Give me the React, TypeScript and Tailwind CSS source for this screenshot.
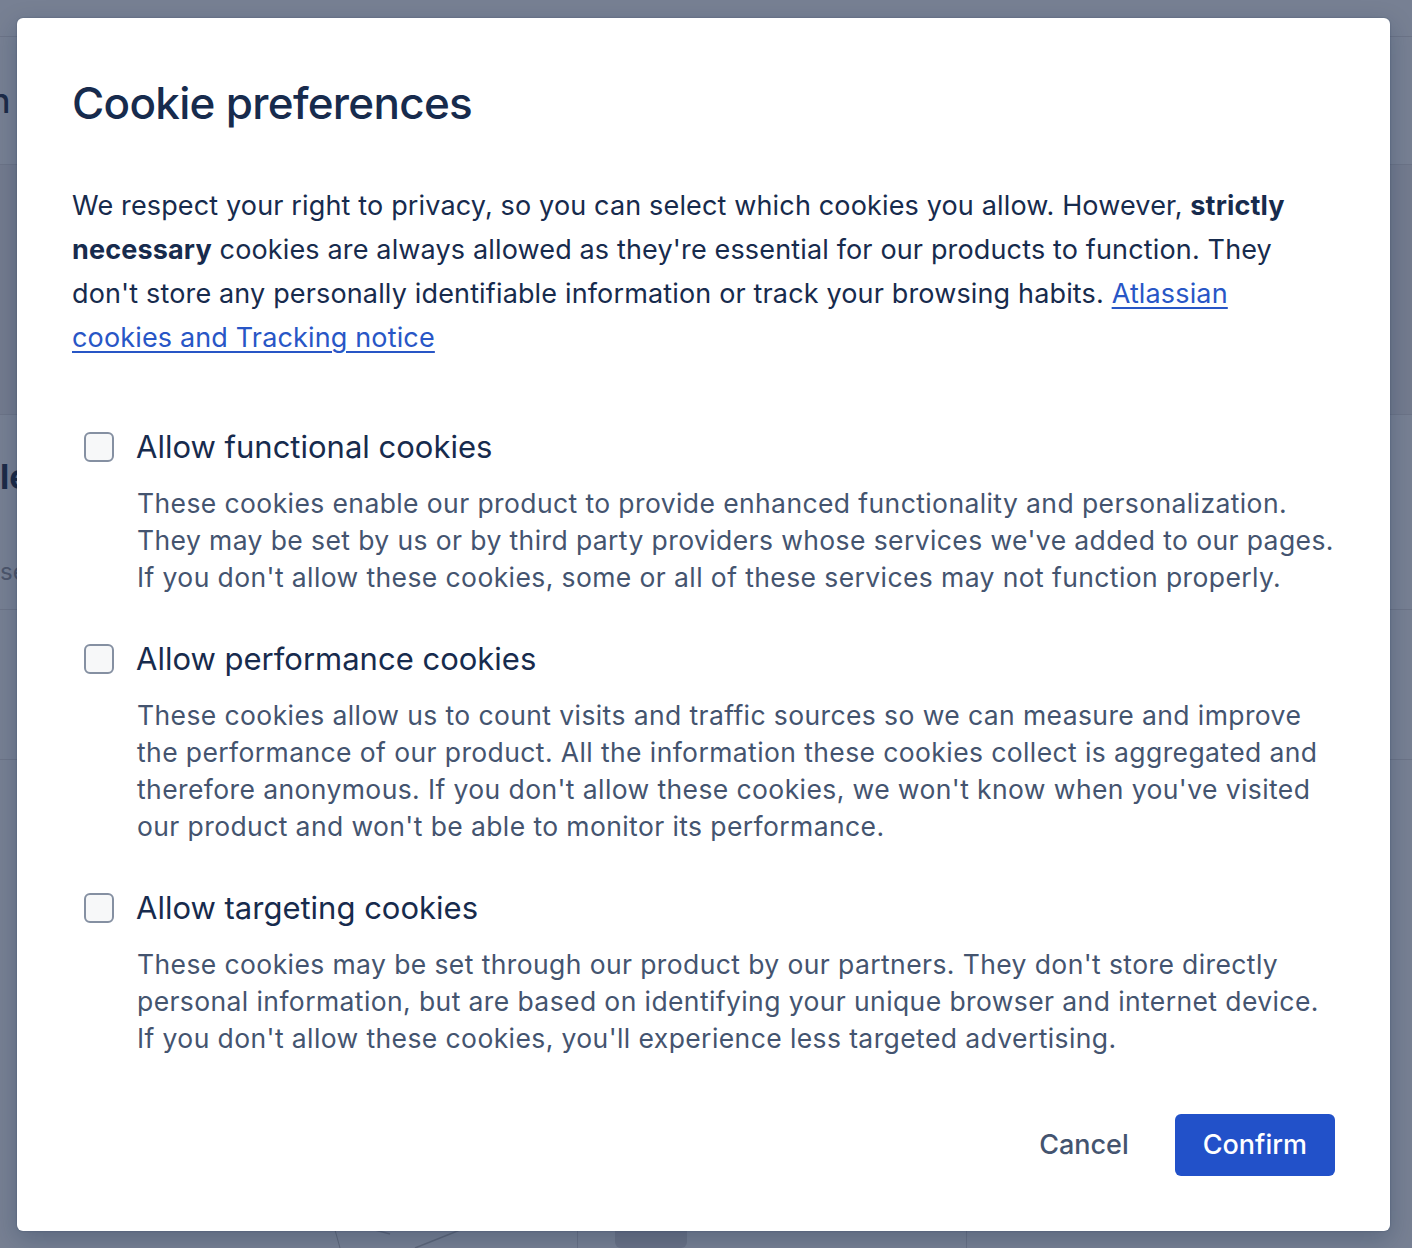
import React from "react";

const font = { fontFamily: "Inter, 'Noto Sans', 'Liberation Sans', sans-serif" };

function Section({ label, lines }: { label: string; lines: string[] }) {
  return (
    <div>
      <label className="flex items-center gap-[22px] h-[40px]">
        <span className="ml-[12px] h-[30px] w-[30px] shrink-0 rounded-[6px] border-2 border-[#8590a2] bg-[#f7f8f9]" />
        <span className="text-[31px] leading-[40px] text-[#172b4d]">{label}</span>
      </label>
      <p className="mt-[18px] pl-[65px] text-[26.5px] leading-[37px] tracking-[0.4px] text-[#44546f]">
        {lines.map((l, i) => (
          <React.Fragment key={i}>
            {l}
            {i < lines.length - 1 && <br />}
          </React.Fragment>
        ))}
      </p>
    </div>
  );
}

export default function App() {
  return (
    <div className="relative h-[1248px] w-full overflow-hidden bg-[#778093]" style={font}>
      {/* Dimmed page underneath */}
      <div className="flex h-full flex-col">
        <div className="h-[37px] border-b border-[#6c7487]" />
        <div className="flex h-[128px] items-center border-b border-[#6c7487]">
          <span className="-ml-[10px] text-[34px] font-medium text-[#1d2b47]">n</span>
        </div>
        <div className="h-[250px] border-b border-[#6c7487] bg-[#737b8e]" />
        <div className="flex h-[195px] flex-col items-start border-b border-[#6c7487] pt-[45px]">
          <span className="text-[34px] font-bold leading-none text-[#1d2b47]">learn</span>
          <span className="mt-[66px] text-[24px] leading-none text-[#4d566b]">settings</span>
        </div>
        <div className="h-[150px] border-b border-[#6c7487]" />
        <div className="flex-1" />
        <div className="flex h-[18px]">
          <div className="w-[578px] border-r border-[#697185]">
            <svg width="578" height="18" className="block">
              <line x1="335" y1="0" x2="340" y2="18" stroke="#5f677a" strokeWidth="1" />
              <line x1="415" y1="18" x2="460" y2="0" stroke="#5f677a" strokeWidth="1.5" />
              <line x1="375" y1="0" x2="390" y2="4" stroke="#5f677a" strokeWidth="1.5" />
            </svg>
          </div>
          <div className="ml-[37px] w-[72px] rounded-b-[6px] bg-[#6a7286]" />
          <div className="w-[280px] border-r border-[#697185]" />
        </div>
      </div>

      {/* Modal */}
      <div className="absolute inset-0 flex items-start pl-[17px] pt-[18px]">
        <div className="w-[1373px] rounded-[6px] bg-white px-[55px] pb-[55px] pt-[57px] shadow-[0_0_2px_rgba(9,30,66,0.3),0_8px_24px_rgba(9,30,66,0.25)]">
          <h1 className="text-[44px] font-medium leading-[56px] tracking-[-0.7px] text-[#172b4d]">
            Cookie preferences
          </h1>
          <p className="mt-[53px] text-[27px] leading-[44px] tracking-[0.15px] text-[#172b4d]">
            We respect your right to privacy, so you can select which cookies you allow. However,{" "}
            <strong className="font-bold">strictly</strong>
            <br />
            <strong className="font-bold">necessary</strong> cookies are always allowed as they're essential for our
            products to function. They
            <br />
            don't store any personally identifiable information or track your browsing habits.{" "}
            <a href="#" className="text-[#2856c6] underline underline-offset-[4px]">
              Atlassian
              <br />
              cookies and Tracking notice
            </a>
          </p>

          <div className="mt-[67px] flex flex-col gap-[43px]">
            <Section
              label="Allow functional cookies"
              lines={[
                "These cookies enable our product to provide enhanced functionality and personalization.",
                "They may be set by us or by third party providers whose services we've added to our pages.",
                "If you don't allow these cookies, some or all of these services may not function properly.",
              ]}
            />
            <Section
              label="Allow performance cookies"
              lines={[
                "These cookies allow us to count visits and traffic sources so we can measure and improve",
                "the performance of our product. All the information these cookies collect is aggregated and",
                "therefore anonymous. If you don't allow these cookies, we won't know when you've visited",
                "our product and won't be able to monitor its performance.",
              ]}
            />
            <Section
              label="Allow targeting cookies"
              lines={[
                "These cookies may be set through our product by our partners. They don't store directly",
                "personal information, but are based on identifying your unique browser and internet device.",
                "If you don't allow these cookies, you'll experience less targeted advertising.",
              ]}
            />
          </div>

          <div className="mt-[57px] flex justify-end gap-[18px]">
            <button className="h-[62px] rounded-[6px] px-[28px] text-[27px] font-medium text-[#44546f]">
              Cancel
            </button>
            <button className="h-[62px] rounded-[6px] bg-[#2251c9] px-[28px] text-[27px] font-medium text-white">
              Confirm
            </button>
          </div>
        </div>
      </div>
    </div>
  );
}
